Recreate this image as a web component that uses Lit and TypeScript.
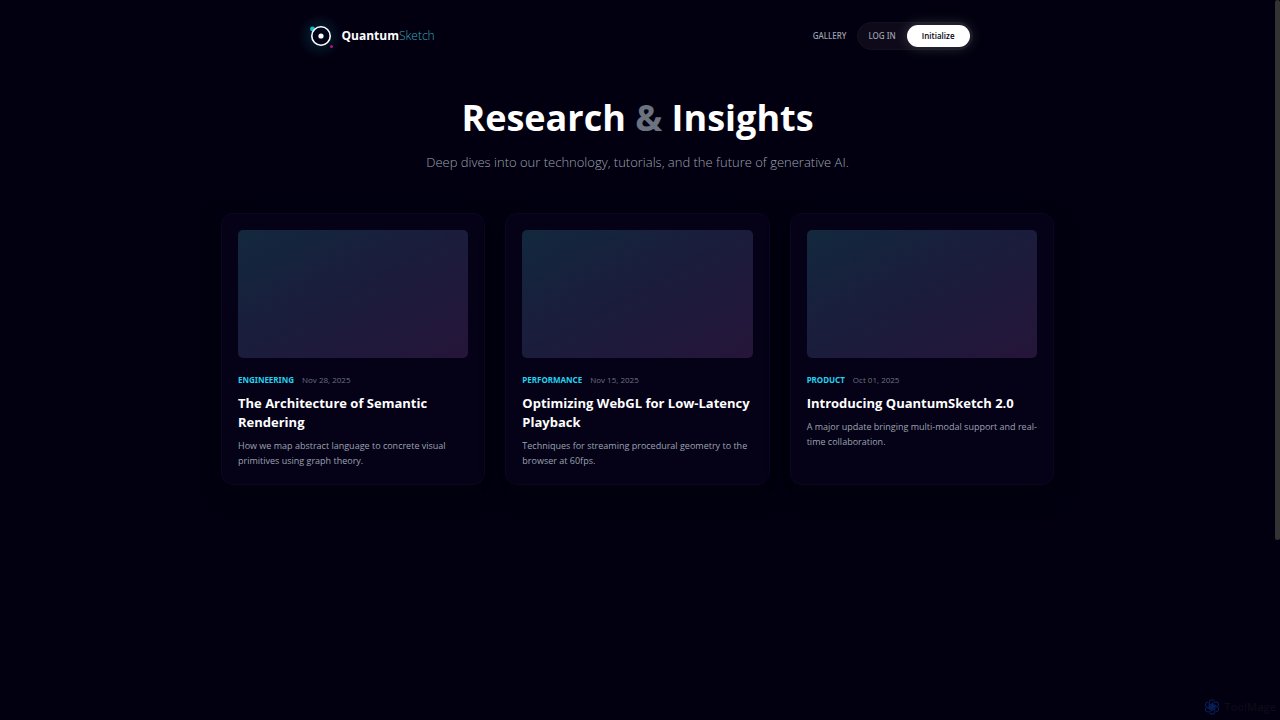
import { LitElement, html, svg, css } from "lit";
import { customElement, property } from "lit/decorators.js";

interface Article {
  category: string;
  date: string;
  title: string;
  summary: string;
}

const ARTICLES: Article[] = [
  {
    category: "ENGINEERING",
    date: "Nov 28, 2025",
    title: "The Architecture of Semantic Rendering",
    summary: "How we map abstract language to concrete visual primitives using graph theory.",
  },
  {
    category: "PERFORMANCE",
    date: "Nov 15, 2025",
    title: "Optimizing WebGL for Low-Latency Playback",
    summary: "Techniques for streaming procedural geometry to the browser at 60fps.",
  },
  {
    category: "PRODUCT",
    date: "Oct 01, 2025",
    title: "Introducing QuantumSketch 2.0",
    summary: "A major update bringing multi-modal support and real-time collaboration.",
  },
];

@customElement("site-header")
export class SiteHeader extends LitElement {
  static styles = css`
    :host {
      display: block;
    }
    .bar {
      display: flex;
      align-items: center;
      justify-content: space-between;
      box-sizing: border-box;
      max-width: 670px;
      margin: 0 auto;
      padding: 22px 0 20px;
    }
    a {
      text-decoration: none;
      color: inherit;
    }
    .brand {
      display: flex;
      align-items: center;
      gap: 5px;
      font-size: 12px;
      line-height: 20px;
    }
    .mark {
      display: block;
      overflow: visible;
      margin: -4px 0;
    }
    .name {
      font-weight: 700;
      color: #fff;
    }
    .light {
      font-weight: 300;
      color: #35a9b8;
    }
    .nav {
      display: flex;
      align-items: center;
      gap: 11px;
      font-family: "Noto Sans", sans-serif;
      font-size: 8px;
      line-height: 12px;
      font-weight: 500;
      color: #9ca3af;
    }
    .pill {
      display: flex;
      align-items: center;
      gap: 11px;
      padding: 2px 2px 2px 10px;
      border: 1px solid #14111f;
      border-radius: 16px;
      background: #0e0a1a;
    }
    .cta {
      font-family: "Open Sans", sans-serif;
      font-size: 8px;
      font-weight: 600;
      line-height: 12px;
      color: #05010f;
      background: #fff;
      border: 0;
      border-radius: 11px;
      padding: 5px 15px;
      box-shadow: 0 0 14px rgba(255, 255, 255, 0.2);
    }
  `;

  render() {
    return html`
      <header class="bar">
        <a class="brand" href="#">
          <svg class="mark" width="34" height="34" viewBox="0 0 34 34" aria-hidden="true">
            <defs>
              <radialGradient id="halo">
                <stop offset="0" stop-color="#0bb4c8" stop-opacity=".24" />
                <stop offset=".55" stop-color="#0bb4c8" stop-opacity=".09" />
                <stop offset="1" stop-color="#0bb4c8" stop-opacity="0" />
              </radialGradient>
            </defs>
            <circle cx="17" cy="17" r="22" fill="url(#halo)" />
            <circle cx="9.5" cy="10" r="2.4" fill="#18bccb" />
            <circle cx="18" cy="17" r="9.2" fill="#03051a" stroke="#fff" stroke-width="1.6" />
            <circle cx="18" cy="17" r="2.6" fill="#fff" />
            <circle cx="28.5" cy="27.5" r="1.5" fill="#b8117b" />
          </svg>
          <span><span class="name">Quantum</span><span class="light">Sketch</span></span>
        </a>
        <nav class="nav">
          <a href="#gallery">GALLERY</a>
          <div class="pill">
            <a href="#login">LOG IN</a>
            <button class="cta" type="button">Initialize</button>
          </div>
        </nav>
      </header>
    `;
  }
}

@customElement("article-card")
export class ArticleCard extends LitElement {
  @property({ attribute: false }) article!: Article;

  static styles = css`
    :host {
      display: flex;
    }
    .card {
      flex: 1;
      box-sizing: border-box;
      padding: 16px;
      border: 1px solid #0e0524;
      border-radius: 12px;
      background: #050117;
      box-shadow: 0 8px 24px rgba(0, 0, 0, 0.3);
    }
    .thumb {
      height: 128px;
      border-radius: 5px;
      background: linear-gradient(to bottom right, #12283d, #1b1c3c 50%, #251539);
      margin-bottom: 16px;
    }
    .meta {
      display: flex;
      gap: 8px;
      font-size: 8px;
      line-height: 12px;
      margin-bottom: 8px;
    }
    .category {
      font-family: "Noto Sans", sans-serif;
      font-weight: 700;
      color: #22d3ee;
    }
    .date {
      color: #6b7280;
    }
    .title {
      margin: 0 0 6px;
      font-size: 13px;
      line-height: 19px;
      font-weight: 700;
      color: #fff;
    }
    .summary {
      margin: 0;
      font-size: 9px;
      line-height: 15px;
      color: #9ca3af;
    }
  `;

  render() {
    const a = this.article;
    return html`
      <article class="card">
        <div class="thumb"></div>
        <div class="meta">
          <span class="category">${a.category}</span>
          <time class="date">${a.date}</time>
        </div>
        <h2 class="title">${a.title}</h2>
        <p class="summary">${a.summary}</p>
      </article>
    `;
  }
}

@customElement("app-root")
export class AppRoot extends LitElement {
  static styles = css`
    :host {
      display: flex;
      position: relative;
      min-height: 100vh;
      background: #020010;
      color: #fff;
      font-family: "Segoe UI", "Open Sans", "Noto Sans", sans-serif;
    }
    .page {
      flex: 1;
      min-width: 0;
    }
    .track {
      width: 5px;
      background: #020010;
    }
    .thumb {
      height: 75vh;
      border-radius: 3px;
      background: #333333;
    }
    .content {
      box-sizing: border-box;
      max-width: 873px;
      margin: 0 auto;
      padding: 22px 20px;
    }
    .hero {
      text-align: center;
      margin-bottom: 41px;
    }
    .headline {
      margin: 0 0 8px;
      font-size: 36px;
      line-height: 52px;
      font-weight: 700;
    }
    .amp {
      color: #6b7280;
    }
    .lead {
      margin: 0;
      font-size: 13px;
      line-height: 20px;
      font-weight: 300;
      color: #9ca3af;
    }
    .grid {
      display: grid;
      grid-template-columns: repeat(auto-fit, minmax(240px, 1fr));
      gap: 20px;
    }
    .watermark {
      position: absolute;
      right: 4px;
      bottom: 5px;
      display: flex;
      align-items: center;
      gap: 4px;
      font-size: 11px;
      line-height: 16px;
      font-weight: 600;
      color: #0b0b19;
    }
  `;

  render() {
    return html`
      <div class="page">
        <site-header></site-header>
        <main class="content">
          <section class="hero">
            <h1 class="headline">Research <span class="amp">&amp;</span> Insights</h1>
            <p class="lead">Deep dives into our technology, tutorials, and the future of generative AI.</p>
          </section>
          <section class="grid">
            ${ARTICLES.map((a) => html`<article-card .article=${a}></article-card>`)}
          </section>
        </main>
      </div>
      <div class="track"><div class="thumb"></div></div>
      <div class="watermark">
        <svg width="16" height="16" viewBox="0 0 16 16" fill="none" stroke="#081f57" stroke-width="1.1" aria-hidden="true">
          ${[0, 60, 120, 180, 240, 300].map(
            (r) => svg`<path transform="rotate(${r} 8 8)" d="M5.2 9.6V3.6a2.8 2.8 0 0 1 5.2-1.4M5.2 6.4 8 4.8" />`
          )}
          <circle cx="8" cy="8" r="1.6" fill="#081f57" />
        </svg>
        <span>ToolMage</span>
      </div>
    `;
  }
}
